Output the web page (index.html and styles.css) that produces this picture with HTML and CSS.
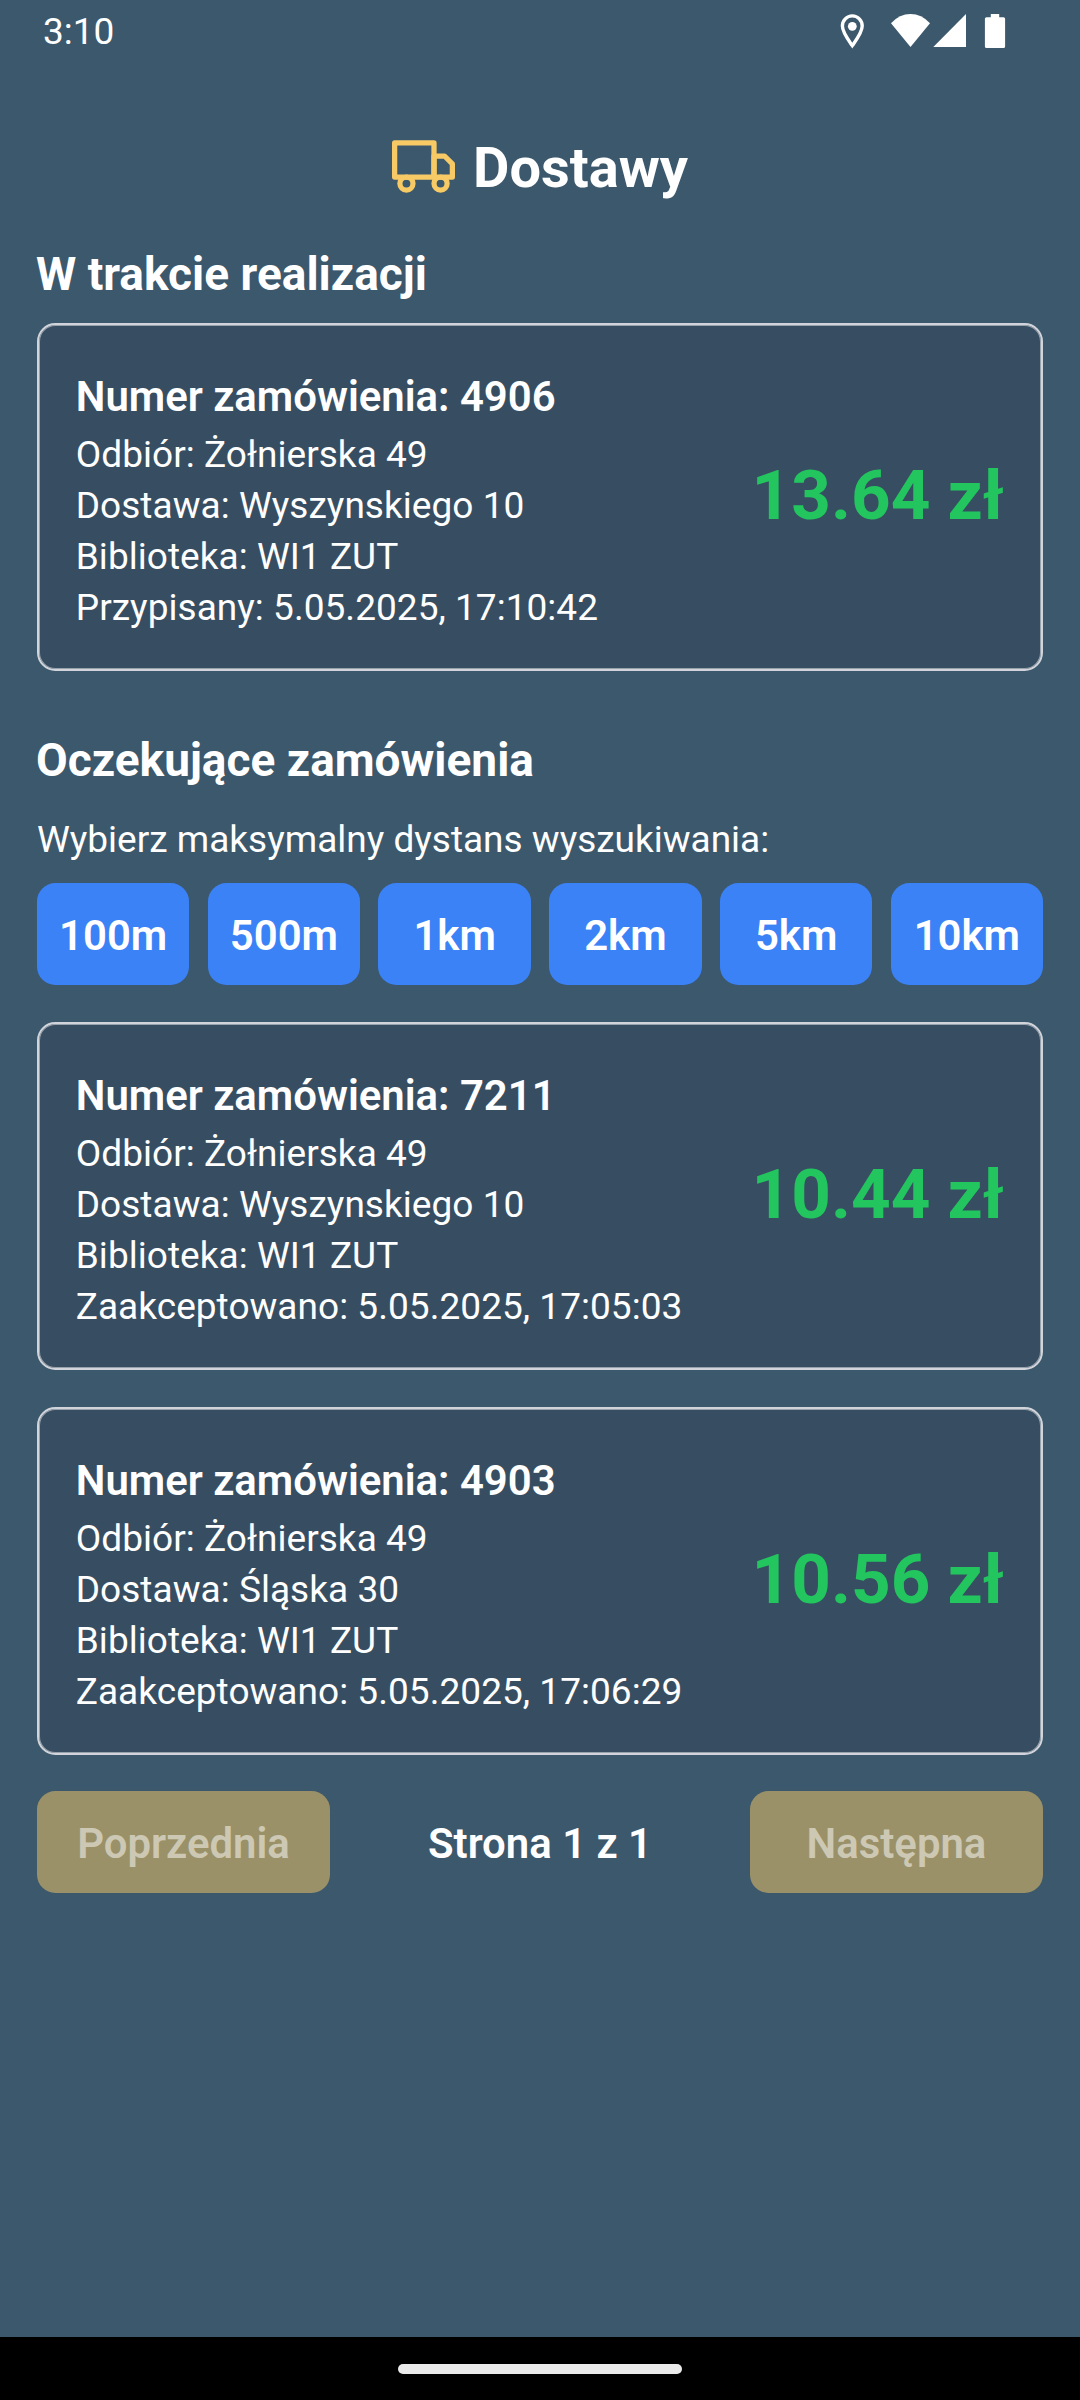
FILE: index.html
```html
<!DOCTYPE html>
<html lang="pl">
<head>
<meta charset="utf-8">
<title>Dostawy</title>
<link rel="stylesheet" href="styles.css">
</head>
<body>
<div class="screen">
  <header class="status-bar">
    <span class="clock">3:10</span>
    <svg class="status-icons" width="166" height="36" viewBox="0 0 166 36" fill="#fff">
      <path fill="none" stroke="#fff" stroke-width="3.4" d="M12.3 32.6C8 26.5 2.4 19.4 2.4 13.1a9.9 10.2 0 0 1 19.8 0c0 6.300-5.600 13.400-9.900 19.500z"/>
      <circle cx="12.300" cy="13.300" r="4.400"/>
      <path d="M51 10.200Q59.500 1 70.500 1T90 10.200L70.500 34z"/>
      <path d="M93.300 34L126 1v33z"/>
      <path d="M150.800 1h8.400v3.200h4.300a1.600 1.600 0 0 1 1.600 1.600v27.600a1.600 1.600 0 0 1-1.600 1.600h-17a1.600 1.600 0 0 1-1.600-1.600V5.800a1.600 1.600 0 0 1 1.600-1.600h4.300z"/>
    </svg>
  </header>

  <main class="content">
    <div class="page-title">
      <svg class="truck" viewBox="0 0 24 24" fill="none" stroke="currentColor" stroke-width="2" stroke-linecap="round" stroke-linejoin="round">
        <rect x="1" y="3" width="15" height="13"/>
        <polygon points="16 8 20 8 23 11 23 16 16 16 16 8"/>
        <circle cx="5.5" cy="18.5" r="2.5"/>
        <circle cx="18.5" cy="18.5" r="2.5"/>
      </svg>
      <h1>Dostawy</h1>
    </div>

    <section class="active">
      <h2>W trakcie realizacji</h2>
      <article class="card">
        <div class="details">
          <h3>Numer zamówienia: 4906</h3>
          <p>Odbiór: Żołnierska 49</p>
          <p>Dostawa: Wyszynskiego 10</p>
          <p>Biblioteka: WI1 ZUT</p>
          <p>Przypisany: 5.05.2025, 17:10:42</p>
        </div>
        <div class="price">13.64 zł</div>
      </article>
    </section>

    <section class="pending">
      <h2>Oczekujące zamówienia</h2>
      <p class="prompt">Wybierz maksymalny dystans wyszukiwania:</p>
      <div class="distances">
        <button>100m</button>
        <button>500m</button>
        <button>1km</button>
        <button>2km</button>
        <button>5km</button>
        <button>10km</button>
      </div>
      <div class="orders">
        <article class="card">
          <div class="details">
            <h3>Numer zamówienia: 7211</h3>
            <p>Odbiór: Żołnierska 49</p>
            <p>Dostawa: Wyszynskiego 10</p>
            <p>Biblioteka: WI1 ZUT</p>
            <p>Zaakceptowano: 5.05.2025, 17:05:03</p>
          </div>
          <div class="price">10.44 zł</div>
        </article>
        <article class="card">
          <div class="details">
            <h3>Numer zamówienia: 4903</h3>
            <p>Odbiór: Żołnierska 49</p>
            <p>Dostawa: Śląska 30</p>
            <p>Biblioteka: WI1 ZUT</p>
            <p>Zaakceptowano: 5.05.2025, 17:06:29</p>
          </div>
          <div class="price">10.56 zł</div>
        </article>
      </div>
      <nav class="pager">
        <button disabled>Poprzednia</button>
        <span>Strona 1 z 1</span>
        <button disabled>Następna</button>
      </nav>
    </section>
  </main>

  <footer class="nav-bar"><div class="handle"></div></footer>
</div>
</body>
</html>
```
FILE: styles.css
```css
* {
  box-sizing: border-box;
  margin: 0;
  padding: 0;
}

body {
  font-family: Roboto, sans-serif;
  font-size: 37px;
  line-height: 51px;
  color: #fff;
  background: #3c586c;
}

.screen {
  display: flex;
  flex-direction: column;
  width: 1080px;
  height: 2400px;
}

.status-bar {
  display: flex;
  justify-content: space-between;
  height: 128px;
  padding: 6px 74px 0 43px;
}

.status-icons {
  margin-top: 7px;
}

.content {
  flex: 1;
  padding: 0 37px;
}

.page-title {
  display: flex;
  align-items: center;
  justify-content: center;
  gap: 18px;
  height: 80px;
}

.truck {
  width: 63px;
  height: 63px;
  margin-bottom: 4px;
  color: #f7ca65;
}

h1 {
  font-size: 56px;
  font-weight: 700;
}

h2 {
  margin-left: -1px;
  font-size: 46px;
  font-weight: 700;
  line-height: 56px;
}

.active {
  padding-top: 38px;
}

.active h2 {
  margin-bottom: 21px;
}

.pending {
  padding-top: 61px;
}

.card {
  display: flex;
  align-items: center;
  justify-content: space-between;
  height: 348px;
  padding: 0 37px 0 36.75px;
  border: 2px solid #d1d5db;
  border-radius: 18.4px;
  background: #374e62;
  box-shadow: inset 0 0 0 1px #98a2ad;
}

.details p {
  letter-spacing: 0.04px;
}

h3 {
  padding-top: 7px;
  margin-bottom: 4px;
  font-size: 41.9px;
  font-weight: 600;
  line-height: 56px;
}

.price {
  margin-bottom: 4px;
  font-size: 69.2px;
  font-weight: 700;
  color: #22c55e;
}

.prompt {
  margin: 26px 0 18px;
}

.distances {
  display: grid;
  grid-template-columns: repeat(6, 1fr);
  gap: 18.4px;
}

button {
  height: 102px;
  padding-top: 3px;
  border: 0;
  border-radius: 18.4px;
  font: 600 41.9px/56px Roboto, sans-serif;
  color: #fff;
  background: #3b82f6;
}

.orders {
  display: flex;
  flex-direction: column;
  gap: 37px;
  margin: 37px 0 36px;
}

.pager {
  display: flex;
  align-items: center;
  justify-content: space-between;
  font-size: 41.9px;
  font-weight: 600;
}

.pager span {
  padding-top: 2px;
}

.pager button {
  width: 293px;
  color: #cdc8b4;
  background: #9a9168;
}

.nav-bar {
  display: flex;
  justify-content: center;
  height: 63px;
  padding-top: 27px;
  background: #000;
}

.handle {
  width: 284px;
  height: 10px;
  border-radius: 5px;
  background: #ebebeb;
}
```
